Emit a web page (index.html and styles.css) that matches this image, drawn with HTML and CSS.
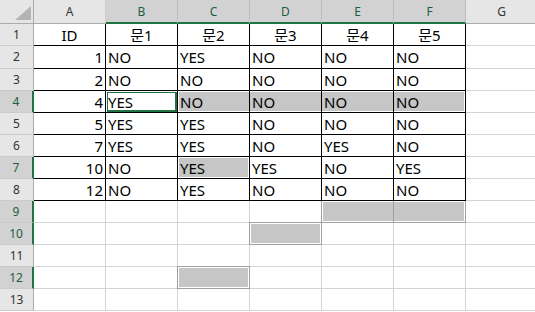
FILE: index.html
```html
<!DOCTYPE html>
<html>
<head>
    <title>Sheet1</title>
    <link rel="stylesheet" href="styles.css">
</head>
<body>
    <div class="sheet">
        <!-- column headers -->
        <div class="corner">
            <svg width="16" height="14" viewBox="0 0 16 14"><polygon points="16,0 16,14 0,14" fill="#b4b4b4"/></svg>
        </div>
        <div class="colhead">A</div>
        <div class="colhead sel">B</div>
        <div class="colhead sel">C</div>
        <div class="colhead sel">D</div>
        <div class="colhead sel">E</div>
        <div class="colhead sel">F</div>
        <div class="colhead">G</div>

        <!-- row 1 -->
        <div class="rowhead">1</div>
        <div class="cell tb mid">ID</div>
        <div class="cell tb mid">문1</div>
        <div class="cell tb mid">문2</div>
        <div class="cell tb mid">문3</div>
        <div class="cell tb mid">문4</div>
        <div class="cell tb mid">문5</div>
        <div class="cell"></div>

        <!-- row 2 -->
        <div class="rowhead">2</div>
        <div class="cell tb num">1</div>
        <div class="cell tb">NO</div>
        <div class="cell tb">YES</div>
        <div class="cell tb">NO</div>
        <div class="cell tb">NO</div>
        <div class="cell tb">NO</div>
        <div class="cell"></div>

        <!-- row 3 -->
        <div class="rowhead">3</div>
        <div class="cell tb num">2</div>
        <div class="cell tb">NO</div>
        <div class="cell tb">NO</div>
        <div class="cell tb">NO</div>
        <div class="cell tb">NO</div>
        <div class="cell tb">NO</div>
        <div class="cell"></div>

        <!-- row 4 -->
        <div class="rowhead sel">4</div>
        <div class="cell tb num">4</div>
        <div class="cell tb active">YES</div>
        <div class="cell tb fill edge-l">NO</div>
        <div class="cell tb fill edge-m">NO</div>
        <div class="cell tb fill edge-m">NO</div>
        <div class="cell tb fill edge-r">NO</div>
        <div class="cell"></div>

        <!-- row 5 -->
        <div class="rowhead">5</div>
        <div class="cell tb num">5</div>
        <div class="cell tb">YES</div>
        <div class="cell tb">YES</div>
        <div class="cell tb">NO</div>
        <div class="cell tb">NO</div>
        <div class="cell tb">NO</div>
        <div class="cell"></div>

        <!-- row 6 -->
        <div class="rowhead">6</div>
        <div class="cell tb num">7</div>
        <div class="cell tb">YES</div>
        <div class="cell tb">YES</div>
        <div class="cell tb">NO</div>
        <div class="cell tb">YES</div>
        <div class="cell tb">NO</div>
        <div class="cell"></div>

        <!-- row 7 -->
        <div class="rowhead sel">7</div>
        <div class="cell tb num">10</div>
        <div class="cell tb">NO</div>
        <div class="cell tb fill">YES</div>
        <div class="cell tb">YES</div>
        <div class="cell tb">NO</div>
        <div class="cell tb">YES</div>
        <div class="cell"></div>

        <!-- row 8 -->
        <div class="rowhead">8</div>
        <div class="cell tb num">12</div>
        <div class="cell tb">NO</div>
        <div class="cell tb">YES</div>
        <div class="cell tb">NO</div>
        <div class="cell tb">NO</div>
        <div class="cell tb">NO</div>
        <div class="cell"></div>

        <!-- row 9 -->
        <div class="rowhead sel">9</div>
        <div class="cell"></div>
        <div class="cell"></div>
        <div class="cell"></div>
        <div class="cell"></div>
        <div class="cell fill edge-l range open-top"></div>
        <div class="cell fill edge-r range open-top"></div>
        <div class="cell"></div>

        <!-- row 10 -->
        <div class="rowhead sel">10</div>
        <div class="cell"></div>
        <div class="cell"></div>
        <div class="cell"></div>
        <div class="cell fill range"></div>
        <div class="cell"></div>
        <div class="cell"></div>
        <div class="cell"></div>

        <!-- row 11 -->
        <div class="rowhead">11</div>
        <div class="cell"></div>
        <div class="cell"></div>
        <div class="cell"></div>
        <div class="cell"></div>
        <div class="cell"></div>
        <div class="cell"></div>
        <div class="cell"></div>

        <!-- row 12 -->
        <div class="rowhead sel">12</div>
        <div class="cell"></div>
        <div class="cell"></div>
        <div class="cell fill range"></div>
        <div class="cell"></div>
        <div class="cell"></div>
        <div class="cell"></div>
        <div class="cell"></div>

        <!-- row 13 -->
        <div class="rowhead">13</div>
        <div class="cell"></div>
        <div class="cell"></div>
        <div class="cell"></div>
        <div class="cell"></div>
        <div class="cell"></div>
        <div class="cell"></div>
        <div class="cell"></div>
    </div>
</body>
</html>
```

FILE: styles.css
```css
body {
    margin: 0;
    overflow: hidden;
    background-color: #fff;
    font-family: "Noto Sans", "Noto Sans CJK KR", sans-serif;
}

.sheet {
    display: grid;
    grid-template-columns: 34px repeat(7, 72px);
    grid-template-rows: 24px 22px 23px repeat(11, 22px);
}

.sheet > div {
    box-sizing: border-box;
    white-space: nowrap;
    overflow: hidden;
}

/* headers */
.corner {
    background-color: #e6e6e6;
    border-right: 1px solid #ababab;
    border-bottom: 1px solid #ababab;
    display: flex;
    align-items: flex-end;
    justify-content: flex-end;
    padding: 0 2px 3px 0;
}

.corner svg {
    display: block;
}

.colhead {
    background-color: #e6e6e6;
    border-right: 1px solid #cbcbcb;
    border-bottom: 1px solid #ababab;
    color: #333;
    font-size: 12px;
    text-align: center;
    line-height: 23px;
}

.colhead.sel {
    background-color: #d2d2d2;
    color: #1e5e3e;
    border-right-color: #bcbcbc;
    border-bottom: 2px solid #217346;
}

.rowhead {
    background-color: #e6e6e6;
    border-right: 1px solid #ababab;
    border-bottom: 1px solid #cbcbcb;
    color: #333;
    font-size: 12px;
    text-align: center;
    line-height: 22px;
}

.rowhead.sel {
    background-color: #d2d2d2;
    color: #1e5e3e;
    border-right: 2px solid #217346;
}

/* cells */
.cell {
    border-right: 1px solid #d4d4d4;
    border-bottom: 1px solid #d4d4d4;
    color: #000;
    font-size: 15px;
    line-height: 22px;
    padding: 0 2px;
}

.tb {
    border-right-color: #000;
    border-bottom-color: #000;
}

.num {
    text-align: right;
}

.mid {
    text-align: center;
}

.active {
    box-shadow: inset 1px 1px 0 #fff, inset 0 0 0 2px #217346;
}

.fill {
    background-color: #c6c6c6;
    box-shadow: inset 0 0 0 1px #fff;
}

.fill.edge-l {
    box-shadow: inset 1px 1px 0 #fff, inset 0 -1px 0 #fff;
}

.fill.edge-m {
    box-shadow: inset 0 1px 0 #fff, inset 0 -1px 0 #fff;
}

.fill.edge-r {
    box-shadow: inset -1px 1px 0 #fff, inset 0 -1px 0 #fff;
}

/* darker outline of a selected range outside the table */
.range {
    position: relative;
    z-index: 1;
    overflow: visible !important;
}

.range::after {
    content: "";
    position: absolute;
    top: -1px;
    left: -1px;
    right: -1px;
    bottom: -1px;
    border: 1px solid #a0a0a0;
}

.range.open-top::after {
    top: 0;
    border-top: 0;
}
```
